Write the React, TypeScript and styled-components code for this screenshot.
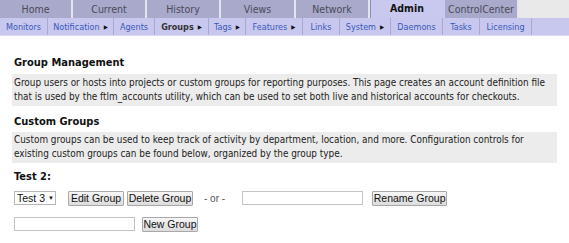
import React from "react";
import styled, { createGlobalStyle } from "styled-components";

const GlobalStyle = createGlobalStyle`
  html, body { margin: 0; padding: 0; background: #ffffff; }
  body { font-family: "DejaVu Sans Condensed", "DejaVu Sans", Verdana, sans-serif; color: #111; }
`;

const TabBar = styled.div`
  display: flex;
  height: 18px;
  background: #e9e9e9;
`;

const Tab = styled.div<{ $w: number; $active?: boolean }>`
  width: ${(p) => p.$w}px;
  flex: none;
  box-sizing: border-box;
  display: flex;
  align-items: center;
  justify-content: center;
  font-size: 10.5px;
  color: ${(p) => (p.$active ? "#111" : "#4a4a5a")};
  font-weight: ${(p) => (p.$active ? 700 : 400)};
  background: ${(p) => (p.$active ? "#c9c9f0" : "#a9a9cb")};
  border-right: 2px solid ${(p) => (p.$active ? "#c9c9f0" : "#e4e4ec")};
  border-left: ${(p) => (p.$active ? "1px solid #8c8cb0" : "none")};
  padding-bottom: ${(p) => (p.$active ? "2px" : "0")};
`;

const SubNav = styled.div`
  display: flex;
  height: 17px;
  background: #c8c8ef;
  border-bottom: 1px solid #d9d9f2;
`;

const NavItem = styled.div<{ $w: number; $current?: boolean }>`
  width: ${(p) => p.$w}px;
  flex: none;
  box-sizing: border-box;
  display: flex;
  align-items: center;
  justify-content: center;
  gap: 4px;
  font-size: 9px;
  white-space: nowrap;
  color: ${(p) => (p.$current ? "#333" : "#3858b8")};
  font-weight: ${(p) => (p.$current ? 700 : 400)};
  border-right: 1px solid #a8a8d4;
`;

const Arrow = styled.span`
  color: #111;
  font-size: 6px;
`;

const Content = styled.div`
  padding: 20px 12px 0 12px;
`;

const Heading = styled.h2<{ $top?: number }>`
  margin: ${(p) => p.$top ?? 0}px 0 0 2px;
  font-size: 11px;
  line-height: 14px;
  font-weight: 700;
  color: #111;
`;

const InfoBox = styled.p<{ $top: number }>`
  margin: ${(p) => p.$top}px 0 0 0;
  padding: 1.5px 3px 2px 2px;
  background: #ececec;
  font-size: 9.9px;
  line-height: 14px;
  color: #222;
`;

const Row = styled.div<{ $top: number }>`
  display: flex;
  align-items: center;
  margin: ${(p) => p.$top}px 0 0 2px;
  height: 16px;
`;

const Select = styled.div`
  box-sizing: border-box;
  width: 42px;
  height: 14px;
  border: 1px solid #b5b5b5;
  background: #fff;
  font-family: "Liberation Sans", Arial, sans-serif;
  font-size: 10.5px;
  white-space: nowrap;
  color: #111;
  display: flex;
  align-items: center;
  padding-left: 2px;
  gap: 3px;
`;

const Button = styled.button<{ $w: number; $ml: number }>`
  box-sizing: border-box;
  width: ${(p) => p.$w}px;
  height: 15px;
  margin-left: ${(p) => p.$ml}px;
  padding: 0;
  border: 1px solid #a9a9a9;
  border-radius: 1px;
  background: linear-gradient(#f6f6f6, #dcdcdc);
  font-family: "Liberation Sans", Arial, sans-serif;
  font-size: 10.5px;
  white-space: nowrap;
  color: #111;
  line-height: 13px;
`;

const Input = styled.div<{ $w: number; $ml: number }>`
  box-sizing: border-box;
  width: ${(p) => p.$w}px;
  height: 14px;
  margin-left: ${(p) => p.$ml}px;
  border: 1px solid #c4c4c4;
  background: #fff;
`;

const Or = styled.span`
  margin-left: 11px;
  font-family: "Liberation Sans", Arial, sans-serif;
  font-size: 10px;
  white-space: nowrap;
  color: #555;
`;

const tabs = [
  { label: "Home", w: 73 },
  { label: "Current", w: 74 },
  { label: "History", w: 74 },
  { label: "Views", w: 75 },
  { label: "Network", w: 74 },
  { label: "Admin", w: 75, active: true },
  { label: "ControlCenter", w: 74 },
];

const nav = [
  { label: "Monitors", w: 48 },
  { label: "Notification", w: 66, arrow: true },
  { label: "Agents", w: 41 },
  { label: "Groups", w: 54, arrow: true, current: true },
  { label: "Tags", w: 37, arrow: true },
  { label: "Features", w: 57, arrow: true },
  { label: "Links", w: 37 },
  { label: "System", w: 51, arrow: true },
  { label: "Daemons", w: 52 },
  { label: "Tasks", w: 37 },
  { label: "Licensing", w: 52 },
];

export default function App() {
  return (
    <>
      <GlobalStyle />
      <TabBar>
        {tabs.map((t) => (
          <Tab key={t.label} $w={t.w} $active={t.active}>
            {t.label}
          </Tab>
        ))}
      </TabBar>
      <SubNav>
        {nav.map((n) => (
          <NavItem key={n.label} $w={n.w} $current={n.current}>
            {n.label}
            {n.arrow && <Arrow>▶</Arrow>}
          </NavItem>
        ))}
      </SubNav>
      <Content>
        <Heading>Group Management</Heading>
        <InfoBox $top={4}>
          Group users or hosts into projects or custom groups for reporting purposes. This page creates an account definition file
          that is used by the ftlm_accounts utility, which can be used to set both live and historical accounts for checkouts.
        </InfoBox>
        <Heading $top={9}>Custom Groups</Heading>
        <InfoBox $top={3}>
          Custom groups can be used to keep track of activity by department, location, and more. Configuration controls for
          existing custom groups can be found below, organized by the group type.
        </InfoBox>
        <Heading $top={7}>Test 2:</Heading>
        <Row $top={6}>
          <Select>
            Test 3 <Arrow>▼</Arrow>
          </Select>
          <Button $w={56} $ml={12}>Edit Group</Button>
          <Button $w={66} $ml={3}>Delete Group</Button>
          <Or>- or -</Or>
          <Input $w={121} $ml={17} />
          <Button $w={75} $ml={9}>Rename Group</Button>
        </Row>
        <Row $top={10}>
          <Input $w={121} $ml={0} />
          <Button $w={56} $ml={7}>New Group</Button>
        </Row>
      </Content>
    </>
  );
}
